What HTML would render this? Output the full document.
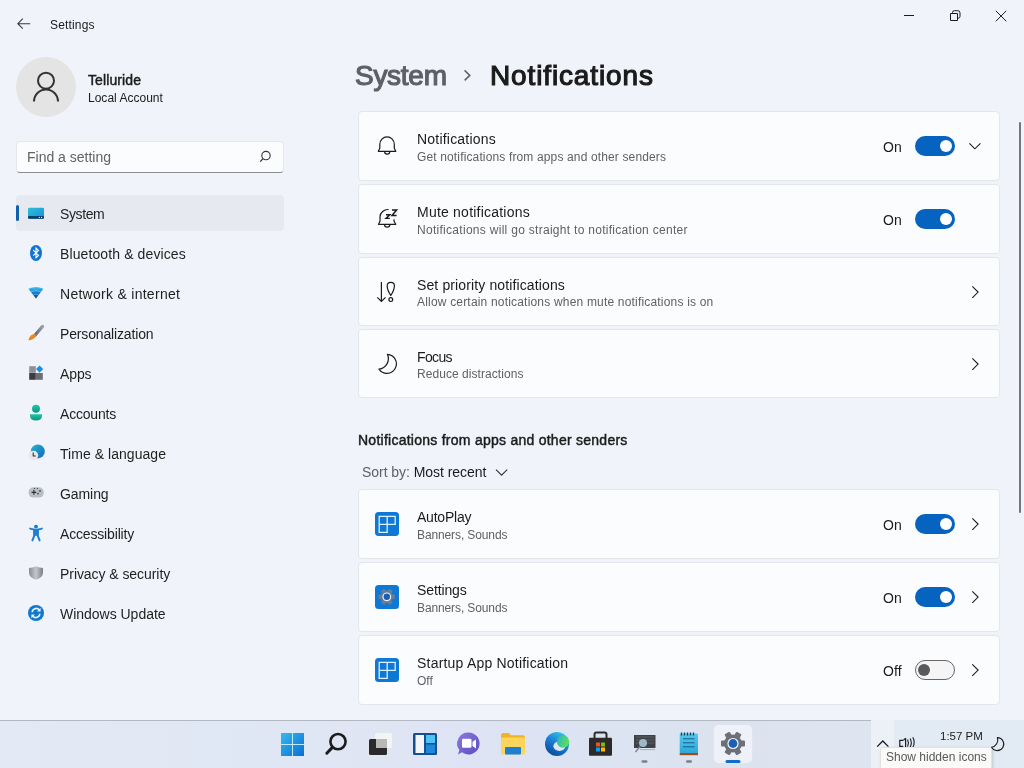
<!DOCTYPE html>
<html><head><meta charset="utf-8">
<style>
*{box-sizing:border-box;margin:0;padding:0}
html,body{width:1024px;height:768px;overflow:hidden}
body{position:relative;background:#f0f3fa;font-family:"Liberation Sans",sans-serif;color:#1b1b1b}
.a{position:absolute;white-space:nowrap;will-change:transform}
.t14{font-size:14px;line-height:14px}
.t12{font-size:12px;line-height:12px}
.nav{position:absolute;left:60px;font-size:14px;line-height:14px;color:#1f1f1f;white-space:nowrap}
.card{position:absolute;left:358px;width:642px;height:70px;background:#fbfcfd;border:1px solid #e3e6ea;border-radius:4px}
.ct{position:absolute;left:417px;font-size:14px;line-height:14px;color:#1b1b1b;white-space:nowrap}
.cs{position:absolute;left:417px;font-size:12px;line-height:12px;color:#5f6165;white-space:nowrap}
.on{position:absolute;left:883px;font-size:14px;line-height:14px;color:#1b1b1b}
.tg{position:absolute;left:915px;width:40px;height:20px;border-radius:10px;background:#0763c0}
.tg::after{content:"";position:absolute;left:25px;top:4px;width:12px;height:12px;border-radius:50%;background:#fff}
.tg.off{background:#f5f5f6;border:1px solid #666}
.tg.off::after{left:2.2px;top:3px;width:12px;height:12px;background:#5a5a5a}
.ico{position:absolute;left:372px;width:30px;height:30px}
</style></head>
<body>
<svg class="a" style="left:14px;top:14px" width="20" height="20" viewBox="14 14 20 20" ><path d="M30.2 23.7H17.8M22.8 18.7l-5 5 5 5" fill="none" stroke="#3a3a3a" stroke-width="1.1" /></svg><div class="a" id="t_settings" style="left:50px;top:18.5px;font-size:12px;line-height:12px;color:#1b1b1b;font-weight:normal;letter-spacing:0.168px;">Settings</div><svg class="a" style="left:900px;top:8px" width="20" height="16" viewBox="900 8 20 16" ><path d="M904 15.5h10" fill="none" stroke="#1b1b1b" stroke-width="1" /></svg><svg class="a" style="left:946px;top:6px" width="20" height="20" viewBox="946 6 20 20" ><path d="M950.5 13.5h7v7h-7z M952.5 13.5v-1q0-1.8 1.8-1.8h3.5q2.2 0 2.2 2.2v3.5q0 1.8-1.8 1.8h-0.7" fill="none" stroke="#1b1b1b" stroke-width="1" /></svg><svg class="a" style="left:990px;top:6px" width="20" height="20" viewBox="990 6 20 20" ><path d="M995.8 10.8l10.5 10.5M1006.3 10.8L995.8 21.3" fill="none" stroke="#1b1b1b" stroke-width="1" /></svg><div class="a" style="left:16px;top:57px;width:60px;height:60px;border-radius:50%;background:#e4e4e4"></div><svg class="a" style="left:26px;top:62px" width="40" height="45" viewBox="26 62 40 45" ><circle cx="46" cy="80.7" r="8" fill="none" stroke="#333" stroke-width="2"/><path d="M34 101.5a12 12 0 0 1 24 0" fill="none" stroke="#333" stroke-width="2" /></svg><div class="a" id="t_tell" style="left:88px;top:73px;font-size:14px;line-height:14px;color:#1b1b1b;font-weight:normal;letter-spacing:0.100px;-webkit-text-stroke:0.45px #1b1b1b">Telluride</div><div class="a" id="t_local" style="left:88px;top:91.6px;font-size:12px;line-height:12px;color:#1b1b1b;font-weight:normal;letter-spacing:0.011px;">Local Account</div><div class="a" style="left:16px;top:141px;width:268px;height:32px;background:#fbfcfd;border:1px solid #e4e6ea;border-bottom:1px solid #8b8d90;border-radius:4px"></div><div class="a" id="t_find" style="left:27px;top:150px;font-size:14px;line-height:14px;color:#616366;font-weight:normal;letter-spacing:0.000px;">Find a setting</div><svg class="a" style="left:254px;top:146px" width="20" height="20" viewBox="254 146 20 20" ><circle cx="266" cy="155.6" r="4.2" fill="none" stroke="#333" stroke-width="1.1"/><path d="M263 158.6L260.2 161.6" fill="none" stroke="#333" stroke-width="1.3" /></svg><div class="a" style="left:16px;top:195px;width:268px;height:36px;background:#e6e9f0;border-radius:4px"></div><div class="a" style="left:16px;top:205px;width:3px;height:16px;background:#0f5fae;border-radius:2px"></div><div class="a" id="nav0" style="left:60px;top:206.9px;font-size:14px;line-height:14px;color:#1f1f1f;font-weight:normal;letter-spacing:-0.400px;">System</div><div class="a" id="nav1" style="left:60px;top:246.9px;font-size:14px;line-height:14px;color:#1f1f1f;font-weight:normal;letter-spacing:0.112px;">Bluetooth &amp; devices</div><div class="a" id="nav2" style="left:60px;top:286.9px;font-size:14px;line-height:14px;color:#1f1f1f;font-weight:normal;letter-spacing:0.279px;">Network &amp; internet</div><div class="a" id="nav3" style="left:60px;top:326.9px;font-size:14px;line-height:14px;color:#1f1f1f;font-weight:normal;letter-spacing:-0.151px;">Personalization</div><div class="a" id="nav4" style="left:60px;top:366.9px;font-size:14px;line-height:14px;color:#1f1f1f;font-weight:normal;letter-spacing:-0.117px;">Apps</div><div class="a" id="nav5" style="left:60px;top:406.9px;font-size:14px;line-height:14px;color:#1f1f1f;font-weight:normal;letter-spacing:-0.190px;">Accounts</div><div class="a" id="nav6" style="left:60px;top:446.9px;font-size:14px;line-height:14px;color:#1f1f1f;font-weight:normal;letter-spacing:0.045px;">Time &amp; language</div><div class="a" id="nav7" style="left:60px;top:486.9px;font-size:14px;line-height:14px;color:#1f1f1f;font-weight:normal;letter-spacing:-0.080px;">Gaming</div><div class="a" id="nav8" style="left:60px;top:526.9px;font-size:14px;line-height:14px;color:#1f1f1f;font-weight:normal;letter-spacing:-0.167px;">Accessibility</div><div class="a" id="nav9" style="left:60px;top:566.9px;font-size:14px;line-height:14px;color:#1f1f1f;font-weight:normal;letter-spacing:-0.059px;">Privacy &amp; security</div><div class="a" id="nav10" style="left:60px;top:606.9px;font-size:14px;line-height:14px;color:#1f1f1f;font-weight:normal;letter-spacing:-0.019px;">Windows Update</div><svg class="a" style="left:0;top:0" width="60" height="640" viewBox="0 0 60 640">
<defs>
<linearGradient id="gsys" x1="0" y1="0" x2="1" y2="1"><stop offset="0" stop-color="#2bc0d8"/><stop offset="1" stop-color="#1c8fd8"/></linearGradient>
<linearGradient id="gnet" x1="0" y1="0" x2="0" y2="1"><stop offset="0" stop-color="#3cc6ef"/><stop offset="0.55" stop-color="#1572c8"/><stop offset="1" stop-color="#0b3f85"/></linearGradient>
<linearGradient id="gsh" x1="0" y1="0" x2="1" y2="0"><stop offset="0" stop-color="#8a8d92"/><stop offset="0.5" stop-color="#c4c6ca"/><stop offset="1" stop-color="#7b7e84"/></linearGradient>
<linearGradient id="gacc" x1="0" y1="0" x2="0" y2="1"><stop offset="0" stop-color="#1ec6a6"/><stop offset="1" stop-color="#0e9683"/></linearGradient>
<linearGradient id="gglobe" x1="0" y1="0" x2="1" y2="1"><stop offset="0" stop-color="#1fb7cc"/><stop offset="1" stop-color="#1466c0"/></linearGradient>
</defs>
<!-- system -->
<rect x="28" y="207.7" width="16" height="11" rx="1.2" fill="url(#gsys)"/>
<rect x="28" y="216" width="16" height="2.8" rx="1" fill="#0b3e6a"/>
<circle cx="39.3" cy="217.4" r="0.6" fill="#cfe"/><circle cx="41.6" cy="217.4" r="0.6" fill="#cfe"/>
<!-- bluetooth -->
<ellipse cx="36" cy="253" rx="6" ry="8" fill="#1173d4"/>
<path d="M33.2 250.2l5.3 5.2-2.5 2.3v-9.6l2.5 2.3-5.3 5.2" fill="none" stroke="#fff" stroke-width="1.1"/>
<!-- network -->
<path d="M28.4 288.8q7.5-3.4 15 0l-7.5 9.8z" fill="url(#gnet)"/><path d="M31 291.6q4.9-2 9.8 0M33.4 294.6q2.5-1 5 0" fill="none" stroke="#8fdcf7" stroke-width="0.7" opacity="0.7"/>
<!-- personalization -->
<linearGradient id="gbr" x1="0" y1="0" x2="1" y2="0"><stop offset="0" stop-color="#5d6470"/><stop offset="1" stop-color="#9aa1ab"/></linearGradient><path d="M42.6 326.4l-7.6 8.8" stroke="url(#gbr)" stroke-width="3.2" stroke-linecap="round"/>
<path d="M35.8 334.4q-2.6-1-5 1.2q-1.8 1.8-2.4 4.8q3.6 0 5.6-1.8q2.2-1.8 1.8-4.2z" fill="#e88a22"/>
<!-- apps -->
<rect x="29.2" y="366.2" width="6.6" height="6.6" fill="#8f9196"/>
<rect x="29.2" y="373" width="6.6" height="6.8" fill="#3b3d42"/>
<rect x="36" y="373" width="6.8" height="6.8" fill="#6d6f75"/>
<path d="M39.6 365.4l3.6 3.6-3.6 3.8-3.6-3.8z" fill="#1b8fe0"/>
<!-- accounts -->
<circle cx="36" cy="408.8" r="4" fill="url(#gacc)"/>
<path d="M30 414.2h12v1.2q0 5-6 5t-6-5z" fill="url(#gacc)"/>
<!-- time -->
<circle cx="37.8" cy="451.4" r="7" fill="url(#gglobe)"/>
<circle cx="33.4" cy="455.6" r="4.8" fill="#e6e8ec"/>
<path d="M33.2 452.4v3.6h2.6" fill="none" stroke="#3b3030" stroke-width="1.1"/>
<!-- gaming -->
<rect x="28.6" y="487.3" width="15.2" height="10.3" rx="5" fill="#b9bdc4"/>
<path d="M31.6 492.4h4.6M33.9 490.1v4.6" stroke="#2d2d2d" stroke-width="1.1"/>
<circle cx="40" cy="491" r="0.9" fill="#3d4d5e"/><circle cx="38" cy="493.6" r="0.9" fill="#3d4d5e"/>
<circle cx="34.4" cy="488.5" r="0.6" fill="#333"/><circle cx="37.4" cy="488.5" r="0.6" fill="#333"/>
<!-- accessibility -->
<circle cx="36" cy="526.6" r="1.9" fill="#1677c8"/>
<path d="M30.2 528.6l4 1v6.2l-1.8 4.6M41.8 528.6l-4 1v6.2l1.8 4.6" fill="none" stroke="#1c7fd4" stroke-width="2" stroke-linejoin="round" stroke-linecap="round"/>
<rect x="33.4" y="528.8" width="5.2" height="7" fill="#1c7fd4"/>
<!-- privacy -->
<path d="M36 566.3q3.6 1.7 7 1.8v4.3q0 5-7 7.4q-7-2.4-7-7.4v-4.3q3.4-0.1 7-1.8z" fill="url(#gsh)"/>
<!-- update -->
<circle cx="36" cy="613" r="8" fill="#1177cf"/>
<path d="M32.2 612.2a4 4 0 0 1 7-2.4M39.8 613.8a4 4 0 0 1-7 2.4" fill="none" stroke="#e8f6ff" stroke-width="1.6"/>
<path d="M40.6 607.8v3.6h-3.6z M31.4 618.2v-3.6h3.6z" fill="#e8f6ff"/>
</svg><div class="a" id="t_sys" style="left:355.2px;top:62.1px;font-size:28px;line-height:28px;color:#5d6066;font-weight:normal;letter-spacing:-0.280px;-webkit-text-stroke:1.15px #5d6066">System</div><svg class="a" style="left:458px;top:64px" width="20" height="22" viewBox="458 64 20 22" ><path d="M464.6 70.4l5.2 5-5.2 5" fill="none" stroke="#5d6066" stroke-width="1.5" /></svg><div class="a" id="t_notif" style="left:489.6px;top:62.1px;font-size:28px;line-height:28px;color:#1b1b1b;font-weight:normal;letter-spacing:0.866px;-webkit-text-stroke:1.15px #1b1b1b">Notifications</div><div class="card" style="top:111px;height:70px"></div><svg class="a" style="left:372px;top:130px" width="30" height="30" viewBox="372 130 30 30" ><path d="M379.8 144.2A7.25 7.25 0 0 1 394.3 144.2V148.3L395.8 151.3H378.3L379.8 148.3Z" fill="none" stroke="#1b1b1b" stroke-width="1.2" stroke-linejoin="round"/><path d="M384.6 151.5A2.6 2.6 0 0 0 389.8 151.5" fill="none" stroke="#1b1b1b" stroke-width="1.2" /></svg><div class="a" id="ct1" style="left:417px;top:132.2px;font-size:14px;line-height:14px;color:#1b1b1b;font-weight:normal;letter-spacing:0.208px;">Notifications</div><div class="a" id="cs1" style="left:417px;top:150.8px;font-size:12px;line-height:12px;color:#5f6165;font-weight:normal;letter-spacing:0.141px;">Get notifications from apps and other senders</div><div class="a" id="on1" style="left:883px;top:140.2px;font-size:14px;line-height:14px;color:#1b1b1b;font-weight:normal;letter-spacing:0.000px;">On</div><div class="tg" style="top:136px"></div><svg class="a" style="left:964px;top:136px" width="20" height="20" viewBox="964 136 20 20" ><path d="M969.4 143.3l5.5 5.5 5.5-5.5" fill="none" stroke="#1b1b1b" stroke-width="1.1" /></svg><div class="card" style="top:184px;height:70px"></div><svg class="a" style="left:372px;top:204px" width="30" height="30" viewBox="372 204 30 30" ><g transform="translate(0 0)"><path d="M388.6 209.5A8 7.5 0 0 0 380 216.8V221.3L378.5 224.3H395.8L394 221.3V219.2" fill="none" stroke="#1b1b1b" stroke-width="1.2" stroke-linejoin="round"/><path d="M384.5 224.5A2.7 2.7 0 0 0 389.9 224.5" fill="none" stroke="#1b1b1b" stroke-width="1.2" /><path d="M386 214.8h3.8l-3.8 3.6h3.8" fill="none" stroke="#1b1b1b" stroke-width="1.4" /><path d="M392 210h4.6l-4.6 5.4h4.6" fill="none" stroke="#1b1b1b" stroke-width="1.5" /></g></svg><div class="a" id="ct2" style="left:417px;top:205.2px;font-size:14px;line-height:14px;color:#1b1b1b;font-weight:normal;letter-spacing:0.220px;">Mute notifications</div><div class="a" id="cs2" style="left:417px;top:223.8px;font-size:12px;line-height:12px;color:#5f6165;font-weight:normal;letter-spacing:0.289px;">Notifications will go straight to notification center</div><div class="a" id="on2" style="left:883px;top:213.2px;font-size:14px;line-height:14px;color:#1b1b1b;font-weight:normal;letter-spacing:0.000px;">On</div><div class="tg" style="top:209px"></div><div class="card" style="top:257px;height:69px"></div><svg class="a" style="left:372px;top:277px" width="30" height="30" viewBox="372 277 30 30" ><g transform="translate(0 0)"><path d="M381.4 282v19M377.3 297.3l4.1 4.1 4.1-4.1" fill="none" stroke="#1b1b1b" stroke-width="1.2" /><path d="M390.8 295.4q-3.6-5.2-3.6-9.6q0-3.4 3.6-3.4t3.6 3.4q0 4.4-3.6 9.6z" fill="none" stroke="#1b1b1b" stroke-width="1.2" stroke-linejoin="round"/><circle cx="390.8" cy="299.6" r="1.9" fill="none" stroke="#1b1b1b" stroke-width="1.2"/></g></svg><div class="a" id="ct3" style="left:417px;top:277.5px;font-size:14px;line-height:14px;color:#1b1b1b;font-weight:normal;letter-spacing:0.124px;">Set priority notifications</div><div class="a" id="cs3" style="left:417px;top:296.1px;font-size:12px;line-height:12px;color:#5f6165;font-weight:normal;letter-spacing:0.187px;">Allow certain notications when mute notifications is on</div><svg class="a" style="left:966px;top:282px" width="20" height="20" viewBox="966 282 20 20" ><path d="M972.3 286.3l5.8 5.8-5.8 5.8" fill="none" stroke="#1b1b1b" stroke-width="1.1" /></svg><div class="card" style="top:329px;height:69px"></div><svg class="a" style="left:372px;top:349px" width="30" height="30" viewBox="372 349 30 30" ><g transform="translate(0 0)"><path d="M387.4 354.3A9.5 9.5 0 1 1 379 369.1A10.5 10.5 0 0 0 387.4 354.3Z" fill="none" stroke="#1b1b1b" stroke-width="1.2" stroke-linejoin="round"/></g></svg><div class="a" id="ct4" style="left:417px;top:349.5px;font-size:14px;line-height:14px;color:#1b1b1b;font-weight:normal;letter-spacing:-0.625px;">Focus</div><div class="a" id="cs4" style="left:417px;top:368.1px;font-size:12px;line-height:12px;color:#5f6165;font-weight:normal;letter-spacing:0.056px;">Reduce distractions</div><svg class="a" style="left:966px;top:354px" width="20" height="20" viewBox="966 354 20 20" ><path d="M972.3 358.3l5.8 5.8-5.8 5.8" fill="none" stroke="#1b1b1b" stroke-width="1.1" /></svg><div class="a" id="t_sect" style="left:358px;top:433.4px;font-size:14px;line-height:14px;color:#1b1b1b;font-weight:normal;letter-spacing:0.255px;-webkit-text-stroke:0.45px #1b1b1b">Notifications from apps and other senders</div><div class="a" id="t_sort" style="left:362px;top:465.1px;font-size:14px;line-height:14px;color:#5f6165;font-weight:normal;letter-spacing:-0.045px;">Sort by: <span style="color:#1b1b1b">Most recent</span></div><svg class="a" style="left:490px;top:462px" width="20" height="20" viewBox="490 462 20 20" ><path d="M496 469.6l5.6 5.6 5.6-5.6" fill="none" stroke="#333" stroke-width="1.1" /></svg><div class="card" style="top:489px;height:70px"></div><svg class="a" style="left:374px;top:512px" width="26" height="26" viewBox="374 512 26 26" ><rect x="375" y="512" width="24" height="24" rx="3.5" fill="#0f78d4"/><path d="M379.2 516.4h16v8h-16zM379.2 524.4v8h8v-16" fill="none" stroke="#d8f2ff" stroke-width="1.3" /></svg><div class="a" id="ct5" style="left:417px;top:510.2px;font-size:14px;line-height:14px;color:#1b1b1b;font-weight:normal;letter-spacing:-0.214px;">AutoPlay</div><div class="a" id="cs5" style="left:417px;top:528.8px;font-size:12px;line-height:12px;color:#5f6165;font-weight:normal;letter-spacing:-0.115px;">Banners, Sounds</div><div class="a" id="on5" style="left:883px;top:518.2px;font-size:14px;line-height:14px;color:#1b1b1b;font-weight:normal;letter-spacing:0.000px;">On</div><div class="tg" style="top:514px"></div><svg class="a" style="left:966px;top:514px" width="20" height="20" viewBox="966 514 20 20" ><path d="M972.3 518.3l5.8 5.8-5.8 5.8" fill="none" stroke="#1b1b1b" stroke-width="1.1" /></svg><div class="card" style="top:562px;height:70px"></div><svg class="a" style="left:374px;top:585px" width="26" height="26" viewBox="374 585 26 26" ><rect x="375" y="585" width="24" height="24" rx="3.5" fill="#0f78d4"/><g transform="translate(386.8 596.8)"><g opacity="0.8"><circle r="6.2" fill="#7d7f86"/><g fill="#7d7f86"><rect x="-2.2" y="-8.2" width="4.4" height="4" rx="1" transform="rotate(30)"/><rect x="-2.2" y="-8.2" width="4.4" height="4" rx="1" transform="rotate(90)"/><rect x="-2.2" y="-8.2" width="4.4" height="4" rx="1" transform="rotate(150)"/><rect x="-2.2" y="-8.2" width="4.4" height="4" rx="1" transform="rotate(210)"/><rect x="-2.2" y="-8.2" width="4.4" height="4" rx="1" transform="rotate(270)"/><rect x="-2.2" y="-8.2" width="4.4" height="4" rx="1" transform="rotate(330)"/></g></g><circle r="4.4" fill="#eef3fa"/><circle r="3.2" fill="#1a5cb0"/></g></svg><div class="a" id="ct6" style="left:417px;top:583.2px;font-size:14px;line-height:14px;color:#1b1b1b;font-weight:normal;letter-spacing:-0.118px;">Settings</div><div class="a" id="cs6" style="left:417px;top:601.8px;font-size:12px;line-height:12px;color:#5f6165;font-weight:normal;letter-spacing:-0.115px;">Banners, Sounds</div><div class="a" id="on6" style="left:883px;top:591.2px;font-size:14px;line-height:14px;color:#1b1b1b;font-weight:normal;letter-spacing:0.000px;">On</div><div class="tg" style="top:587px"></div><svg class="a" style="left:966px;top:587px" width="20" height="20" viewBox="966 587 20 20" ><path d="M972.3 591.3l5.8 5.8-5.8 5.8" fill="none" stroke="#1b1b1b" stroke-width="1.1" /></svg><div class="card" style="top:635px;height:70px"></div><svg class="a" style="left:374px;top:658px" width="26" height="26" viewBox="374 658 26 26" ><rect x="375" y="658" width="24" height="24" rx="3.5" fill="#0f78d4"/><path d="M379.2 662.4h16v8h-16zM379.2 670.4v8h8v-16" fill="none" stroke="#d8f2ff" stroke-width="1.3" /></svg><div class="a" id="ct7" style="left:417px;top:656.2px;font-size:14px;line-height:14px;color:#1b1b1b;font-weight:normal;letter-spacing:0.205px;">Startup App Notification</div><div class="a" id="cs7" style="left:417px;top:674.8px;font-size:12px;line-height:12px;color:#5f6165;font-weight:normal;letter-spacing:0.000px;">Off</div><div class="a" id="on7" style="left:883px;top:664.2px;font-size:14px;line-height:14px;color:#1b1b1b;font-weight:normal;letter-spacing:0.150px;">Off</div><div class="tg off" style="top:660px"></div><svg class="a" style="left:966px;top:660px" width="20" height="20" viewBox="966 660 20 20" ><path d="M972.3 664.3l5.8 5.8-5.8 5.8" fill="none" stroke="#1b1b1b" stroke-width="1.1" /></svg><div class="a" style="left:0;top:720px;width:871px;height:48px;background:linear-gradient(90deg,#e3eaf5,#e0e7f4 30%,#dde3f3 60%,#dce3ef 85%,#dfe5f0);border-top:1px solid #b2b9c3"></div>
<div class="a" style="left:871px;top:720px;width:153px;height:48px;background:#e2eaf4"></div>
<div class="a" style="left:871px;top:720px;width:23px;height:48px;background:#ecf1f8"></div>
<!-- settings active bg -->
<div class="a" style="left:714px;top:725px;width:38px;height:38px;border-radius:5px;background:#eef1f7;box-shadow:0 0 0 0.5px #e2e6ee"></div>
<svg class="a" style="left:260px;top:720px" width="500" height="48" viewBox="260 720 500 48">
<defs>
<linearGradient id="gwin" x1="0" y1="0" x2="1" y2="1"><stop offset="0" stop-color="#35b8f2"/><stop offset="1" stop-color="#0a6fcf"/></linearGradient>
<linearGradient id="gedge" x1="0" y1="0" x2="1" y2="1"><stop offset="0" stop-color="#2fb7e8"/><stop offset="0.6" stop-color="#1d7ad2"/><stop offset="1" stop-color="#0c4f9e"/></linearGradient>
<linearGradient id="gedge2" x1="0" y1="0" x2="1" y2="1"><stop offset="0" stop-color="#3ad07a"/><stop offset="1" stop-color="#1aa8c8"/></linearGradient>
<linearGradient id="gchat" x1="0" y1="0" x2="1" y2="1"><stop offset="0" stop-color="#8d7bdc"/><stop offset="1" stop-color="#5a4cc4"/></linearGradient>
<linearGradient id="gnote" x1="0" y1="0" x2="0" y2="1"><stop offset="0" stop-color="#52c9ef"/><stop offset="1" stop-color="#2ba8d8"/></linearGradient>
</defs>
<!-- start -->
<g fill="url(#gwin)"><rect x="281" y="733" width="23" height="23"/></g><path d="M292.5 733v23M281 744.5h23" stroke="#bfe8fb" stroke-width="1"/>
<!-- search -->
<circle cx="338" cy="741.6" r="7.6" fill="none" stroke="#1c1c1c" stroke-width="2.6"/>
<path d="M332.4 747.4l-5.6 5.8" stroke="#1c1c1c" stroke-width="3" stroke-linecap="round"/>
<!-- task view -->
<rect x="375" y="733" width="17" height="15" rx="1.5" fill="#f4f4f4"/>
<rect x="369" y="739" width="18" height="16" rx="1.5" fill="#2a2a2a"/>
<rect x="376" y="739" width="11" height="9" fill="#b8b8b8"/>
<!-- widgets -->
<rect x="413" y="733" width="24" height="22" rx="1.5" fill="#13508f"/>
<rect x="415.5" y="735" width="8.5" height="18" fill="#f3f5f8"/>
<rect x="426" y="735" width="9" height="8" fill="#4ec4f2"/>
<rect x="426" y="744.5" width="9" height="8.5" fill="#1e88dc"/>
<!-- chat -->
<path d="M468.6 732.5a11 11 0 1 1-6.6 19.8l-4 2.2 1.4-4.4a11 11 0 0 1 9.2-17.6z" fill="url(#gchat)"/>
<rect x="462" y="738.8" width="9.5" height="9" rx="1.3" fill="#fff"/>
<path d="M472.5 741.8l3.5-2.4v9l-3.5-2.4z" fill="#fff"/>
<!-- explorer -->
<path d="M501 735q0-2 2-2h6l2 2.2h12q2 0 2 2V754h-24z" fill="#f0b422"/>
<rect x="501" y="737.5" width="24" height="17" rx="1" fill="#fcd55a"/>
<rect x="505" y="747" width="16" height="7.5" rx="1" fill="#1c7fd6"/>
<!-- edge -->
<linearGradient id="ge1" x1="0.2" y1="0.95" x2="0.7" y2="0.05"><stop offset="0" stop-color="#0b4a98"/><stop offset="0.55" stop-color="#1a7fd4"/><stop offset="1" stop-color="#33c0e4"/></linearGradient>
<linearGradient id="ge2" x1="0" y1="0" x2="1" y2="0.3"><stop offset="0" stop-color="#26b4c8"/><stop offset="1" stop-color="#5fe05a"/></linearGradient>
<circle cx="557" cy="744" r="12" fill="url(#ge1)"/>
<ellipse cx="559.4" cy="746.2" rx="6" ry="4.8" fill="#dfe7f3"/>
<circle cx="563" cy="741.6" r="6.2" fill="url(#ge2)"/>
<path d="M555 745.6q1.4 5 6.5 5.4q4 0.2 6.6-1.6q-2.4 4.6-7 6" fill="#0e55a8" opacity="0.0"/>
<!-- store -->
<path d="M594.5 738v-3.5q0-2 2-2h8q2 0 2 2v3.5" fill="none" stroke="#2c2c2c" stroke-width="2"/>
<rect x="589" y="737.8" width="23" height="18" rx="1" fill="#2b2b2b"/>
<rect x="596" y="742.5" width="4" height="4" fill="#f25022"/><rect x="601" y="742.5" width="4" height="4" fill="#7fba00"/>
<rect x="596" y="747.5" width="4" height="4" fill="#00a4ef"/><rect x="601" y="747.5" width="4" height="4" fill="#ffb900"/>
<!-- magnifier screen app -->
<rect x="634" y="735" width="21.5" height="13" fill="#3e4247"/>
<path d="M636 737h18M636 740h18M636 743h18" stroke="#666b72" stroke-width="0.8"/>
<circle cx="643" cy="743" r="4" fill="#9fb6c8"/>
<path d="M640 746.5l-4.5 5.5" stroke="#7d8590" stroke-width="1.4"/>
<path d="M640 749.6h15" stroke="#9aa0a8" stroke-width="0.8"/>
<rect x="641.5" y="760.2" width="6" height="2.6" rx="1.3" fill="#7b7f86"/>
<!-- notepad -->
<rect x="679.7" y="733.5" width="18.3" height="20" rx="1" fill="url(#gnote)"/>
<path d="M681.5 732.5v3M684.5 732.5v3M687.5 732.5v3M690.5 732.5v3M693.5 732.5v3" stroke="#1c3d5c" stroke-width="1.3"/>
<path d="M683 738.8h11.6M683 742.8h11.6M683 746.8h11.6" stroke="#1d5a85" stroke-width="1"/>
<rect x="679.7" y="753" width="18.3" height="2.2" fill="#a24a14"/>
<rect x="686" y="760.2" width="6" height="2.6" rx="1.3" fill="#7b7f86"/>
<!-- settings gear -->
<g transform="translate(733 743.5)">
<circle r="9" fill="#6c7078"/>
<g fill="#6c7078">
<rect x="-3" y="-12" width="6" height="5" rx="1" transform="rotate(30)"/>
<rect x="-3" y="-12" width="6" height="5" rx="1" transform="rotate(90)"/>
<rect x="-3" y="-12" width="6" height="5" rx="1" transform="rotate(150)"/>
<rect x="-3" y="-12" width="6" height="5" rx="1" transform="rotate(210)"/>
<rect x="-3" y="-12" width="6" height="5" rx="1" transform="rotate(270)"/>
<rect x="-3" y="-12" width="6" height="5" rx="1" transform="rotate(330)"/>
</g>
<circle r="5.6" fill="#f4f6fa"/>
<circle r="4.4" fill="#1b5fb6"/>
</g>
<rect x="725.5" y="760" width="15" height="3" rx="1.5" fill="#0f6cc8"/>
</svg>
<!-- tray -->
<svg class="a" style="left:870px;top:728px" width="150" height="30" viewBox="870 728 150 30">
<path d="M877.2 746.6l5.6-5.6 5.6 5.6" fill="none" stroke="#1c1c1c" stroke-width="1.3"/>
<path d="M903.2 740.4h-3.4v6h3.4M905.6 738.2v8.8" fill="none" stroke="#1c1c1c" stroke-width="1.2"/>
<path d="M903.4 740.4l2.2-2.2M907.6 739.6q1.6 3.2 0 7M910.2 738.4q2.2 4.2 0 8.6M912.8 737.2q2.8 5.2 0 10.4" fill="none" stroke="#1c1c1c" stroke-width="1.1"/>
<path d="M997.4 737.6A6.5 6.5 0 1 1 991.6 747.3A7.5 7.5 0 0 0 997.4 737.6Z" fill="none" stroke="#1c1c1c" stroke-width="1.1" stroke-linejoin="round"/>
</svg>
<div class="a" style="left:940px;top:729.6px;font-size:11.5px;line-height:12px;color:#1b1b1b">1:57 PM</div>
<div class="a" style="left:880px;top:747px;width:112px;height:24px;background:#fafaf8;border:1px solid #e2e2e2;border-radius:3px;box-shadow:1px 1px 3px rgba(0,0,0,.15)"></div>
<div class="a t12" style="left:886px;top:750.5px;color:#595959">Show hidden icons</div>
<!-- scrollbar -->
<div class="a" style="left:1019px;top:121.5px;width:2px;height:391px;background:#72777d;border-radius:1px"></div>

</body></html>
